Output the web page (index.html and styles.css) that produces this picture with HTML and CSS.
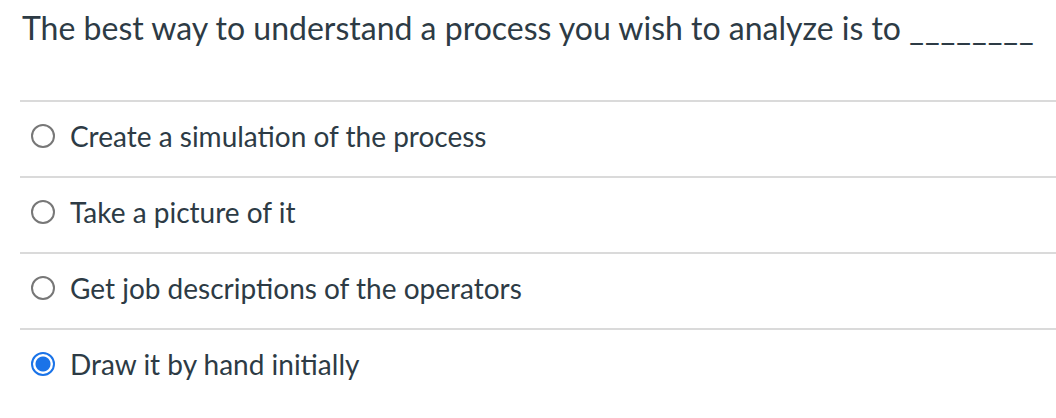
FILE: index.html
```html
<!DOCTYPE html>
<html>
<head>
<meta charset="utf-8">
<link rel="stylesheet" href="styles.css">
</head>
<body>
<div class="question">
  <div class="prompt">The best way to understand a process you wish to analyze is to <span class="blank">________</span></div>
  <div class="answers">
    <label class="answer"><span class="radio"></span><span class="text">Create a simulation of the process</span></label>
    <label class="answer"><span class="radio"></span><span class="text">Take a picture of it</span></label>
    <label class="answer"><span class="radio"></span><span class="text">Get job descriptions of the operators</span></label>
    <label class="answer selected"><span class="radio"></span><span class="text">Draw it by hand initially</span></label>
  </div>
</div>
</body>
</html>
```
FILE: styles.css
```css
html, body {
  margin: 0;
  padding: 0;
  background: #ffffff;
}
body {
  font-family: Lato, "Noto Sans", sans-serif;
  color: #2d3b45;
}
.question {
  padding: 0 0 0 20px;
}
.prompt {
  font-size: 32px;
  line-height: 38px;
  padding: 9px 0 0 2px;
  height: 102px;
  box-sizing: border-box;
  border-bottom: 2px solid #dadada;
  white-space: nowrap;
}
.blank {
  letter-spacing: 1px;
}
.answer {
  display: flex;
  align-items: center;
  height: 76px;
  padding-bottom: 6px;
  box-sizing: border-box;
  border-bottom: 2px solid #dadada;
  font-size: 28px;
}
.answer:last-child {
  border-bottom: none;
  height: 74px;
}
.radio {
  width: 24px;
  height: 24px;
  box-sizing: border-box;
  border: 2px solid #777;
  border-radius: 50%;
  margin: 0 15px 0 11px;
  flex: none;
}
.selected .radio {
  border-color: #1a73e8;
  background: radial-gradient(circle, #1a73e8 0 7px, #fff 8px);
}
```
